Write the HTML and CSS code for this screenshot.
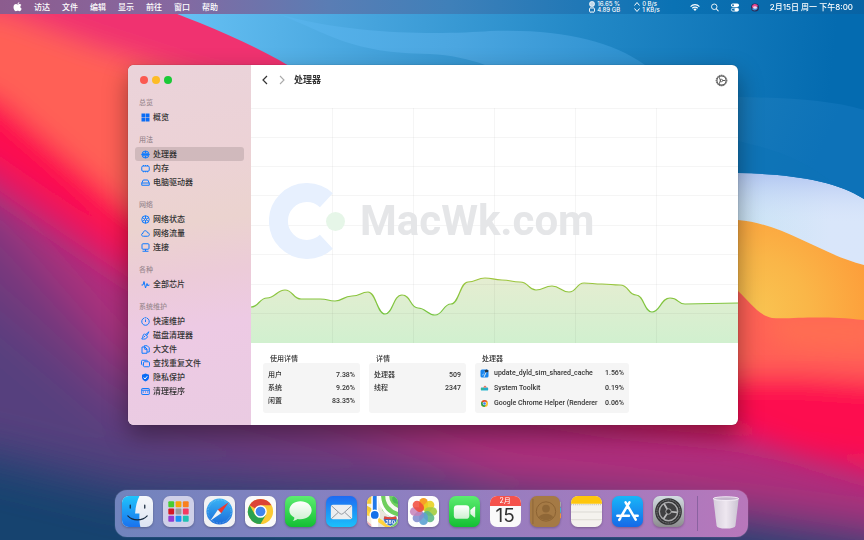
FILE: index.html
```html
<!DOCTYPE html>
<html lang="zh-CN">
<head>
<meta charset="utf-8">
<meta name="viewport" content="width=device-width, initial-scale=1">
<title>处理器</title>
<link rel="stylesheet" href="styles.css">
</head>
<body>
<svg class="wallpaper" viewBox="0 0 864 540" preserveAspectRatio="none" aria-hidden="true">
  <defs>
    <filter id="soft" x="-10%" y="-30%" width="120%" height="160%"><feGaussianBlur stdDeviation="24"/></filter>
    <filter id="soft2" x="-10%" y="-30%" width="120%" height="160%"><feGaussianBlur stdDeviation="13"/></filter>
    <linearGradient id="sky" x1="180" y1="20" x2="830" y2="90" gradientUnits="userSpaceOnUse"><stop offset="0" stop-color="#66c0f3"/><stop offset=".3" stop-color="#45a3dc"/><stop offset=".62" stop-color="#2288c6"/><stop offset="1" stop-color="#046bb0"/></linearGradient>
    <linearGradient id="wave" x1="280" y1="0" x2="640" y2="60" gradientUnits="userSpaceOnUse"><stop offset="0" stop-color="#58b4ec"/><stop offset=".5" stop-color="#4ba6e0"/><stop offset="1" stop-color="#2d90cf"/></linearGradient>
    <linearGradient id="deep" x1="738" y1="0" x2="864" y2="60" gradientUnits="userSpaceOnUse"><stop offset="0" stop-color="#1b7dbb"/><stop offset="1" stop-color="#0d72b8"/></linearGradient>
    <linearGradient id="ice" x1="738" y1="190" x2="830" y2="190" gradientUnits="userSpaceOnUse"><stop offset="0" stop-color="#c8e3f4"/><stop offset="1" stop-color="#d9e6fa"/></linearGradient>
    <linearGradient id="iceTop" x1="0" y1="172" x2="0" y2="255" gradientUnits="userSpaceOnUse"><stop offset="0" stop-color="#a9bdf0" stop-opacity=".8"/><stop offset=".6" stop-color="#d8e6fa" stop-opacity=".1"/></linearGradient>
    <radialGradient id="gold" cx="755" cy="312" r="120" gradientUnits="userSpaceOnUse"><stop offset="0" stop-color="#f9c451"/><stop offset=".45" stop-color="#fab648"/><stop offset="1" stop-color="#fd9d3a"/></radialGradient>
  </defs>
  <rect width="864" height="540" fill="#16436f"/>
  <g filter="url(#soft)">
    <path fill="#573f7e" d="M-60-60V445L0 458L130 490L430 508L700 525L940 560V-60z"/>
    <path fill="#74397d" d="M-60-60V260L0 310L130 420L300 465L600 500L940 540V-60z"/>
    <path fill="#b02f7c" d="M-60-60V180L0 215L130 365L300 400L500 480L700 500L940 535V-60z"/>
  </g>
  <g filter="url(#soft2)">
    <path fill="#e01a66" d="M-60-60V150L0 192L130 280L330 380L600 425L738 440L940 495V-60z"/>
    <path fill="#fd0950" d="M-60-60V130L0 165L130 255L330 350L600 400L738 425L800 450L940 470V-60z"/>
    <path fill="#ff6157" d="M-60-60V70L0 98L60 150L130 210L330 320L600 360L738 375L800 375L940 385V-60z"/>
    <path fill="#f0316f" d="M-60-60V10L0 12L90 45L200 80L340 110L400-60z"/>
  </g>
  <path fill="#ff7a50" opacity=".6" filter="url(#soft2)" d="M760 315H880V350L780 345z"/>
  <path fill="url(#gold)" d="M700 200H864V320C820 315 795 319 772 318C758 315 750 302 738 291L700 280z"/>
  <path fill="url(#ice)" d="M700 150H864V265C820 254 785 224 738 220L700 220z"/>
  <path fill="url(#iceTop)" d="M700 150H864V265C820 254 785 224 738 220L700 220z"/>
  <path fill="url(#sky)" d="M140 0C200 22 258 45 302 74L400 173H738C790 174 835 180 864 199V0z"/>
  <path fill="url(#wave)" d="M278 14C330 34 350 53 430 54C450 55 470 59 485 65H645C610 40 560 29 490 31C450 34 360 37 278 14z"/>
  <path fill="url(#deep)" d="M738 97C790 98 830 100 864 110V199C835 180 790 174 738 173z"/>
  <path fill="#0d73b6" opacity=".6" d="M738 141C775 150 800 158 830 181C800 174 770 173 738 173z"/>
</svg>

<header class="menubar">
  <nav class="menus" aria-label="菜单">
    <a href="#" class="apple" aria-label="Apple"><svg viewBox="0 0 16 18" aria-hidden="true"><path fill="#fff" d="M11.4.3c.1 1.900-1.500 3.600-3.300 3.500C7.900 2 9.600.4 11.400.3zM8.400 4.700c.8 0 1.800-1 3.400-1 1.200 0 2.400.6 3.200 1.700-2.800 1.600-2.400 5.500.5 6.600-.6 1.700-2.200 4.600-4 4.600-1.200 0-1.700-.8-3.100-.8s-1.900.8-3.100.8C3.100 16.600.8 12.700.8 9.300c0-3.300 2.100-5.500 4.400-5.500 1.400 0 2.400.9 3.200.9z"/></svg></a>
    <a href="#">访达</a><a href="#">文件</a><a href="#">编辑</a><a href="#">显示</a><a href="#">前往</a><a href="#">窗口</a><a href="#">帮助</a>
  </nav>
  <div class="stats">
    <div class="stat">
      <span><svg viewBox="0 0 12 12" aria-hidden="true"><circle cx="6" cy="6" r="5" fill="#fff" fill-opacity=".5" stroke="#fff" stroke-width="1.500"/><path d="M4 1v10M8 1v10M1 4h10M1 8h10" stroke="#fff"/></svg>16.65 %</span>
      <span><svg viewBox="0 0 12 12" aria-hidden="true"><rect x="1" y="2" width="10" height="8" rx="2" fill="none" stroke="#fff" stroke-width="1.800"/><path d="M3 2V.5M6 2V.5M9 2V.5M3 11.500V10M6 11.500V10M9 11.500V10" stroke="#fff"/></svg>4.89 GB</span>
    </div>
    <div class="stat">
      <span><svg viewBox="0 0 12 12" aria-hidden="true"><path d="M1 9l5-6 5 6" fill="none" stroke="#fff" stroke-width="2"/></svg>0 B/s</span>
      <span><svg viewBox="0 0 12 12" aria-hidden="true"><path d="M1 3l5 6 5-6" fill="none" stroke="#fff" stroke-width="2"/></svg>1 KB/s</span>
    </div>
  </div>
  <div class="tray">
    <svg viewBox="0 0 20 18" aria-label="Wi-Fi" role="img"><g fill="none" stroke="#fff" stroke-width="2.300"><path d="M1.200 7.200C6 1.800 14 1.800 18.800 7.200"/><path d="M4.600 10.500c3-3.200 7.800-3.200 10.800 0"/></g><path fill="#fff" d="M6.800 12.500c1.800-1.800 4.600-1.800 6.400 0L10 16z"/></svg>
    <svg viewBox="0 0 20 18" aria-label="搜索" role="img"><circle cx="8.500" cy="7.500" r="5.500" fill="none" stroke="#fff" stroke-width="1.800"/><path d="M12.500 11.500L17 16.500" stroke="#fff" stroke-width="2.200"/></svg>
    <svg viewBox="0 0 20 18" aria-label="控制中心" role="img"><rect x="2" y="1" width="16" height="7" rx="3.500" fill="#fff"/><circle cx="6" cy="4.500" r="2" fill="#2372ab"/><rect x="2.800" y="10.300" width="14.400" height="6" rx="3" fill="none" stroke="#fff" stroke-width="1.600"/><rect x="9" y="10" width="8" height="6.500" rx="3" fill="#fff"/></svg>
    <svg viewBox="0 0 20 18" aria-label="Siri" role="img"><circle cx="10" cy="9" r="8" fill="#2b2b55"/><path d="M4 6c4-6 10-4 12 0-2 3-9 1-12 4z" fill="#e5478f"/><path d="M3 11c5 1 8-4 13-2-1 5-7 7-10 5z" fill="#3f8fd8"/><ellipse cx="10" cy="9" rx="4" ry="2.500" fill="#f7d4ee"/></svg>
    <time datetime="2021-02-15T20:00">2月15日 周一 下午8:00</time>
  </div>
</header>

<main class="window">
  <aside class="sidebar">
    <div class="lights"><button class="red" aria-label="关闭"></button><button class="yellow" aria-label="最小化"></button><button class="green" aria-label="缩放"></button></div>
    <nav aria-label="边栏">
      <section><h2>总览</h2>
        <a href="#"><svg viewBox="0 0 18 18" aria-hidden="true"><path fill="#0a6cf5" stroke="none" d="M1 1h7.500v7.500H1zM9.500 1H17v7.500H9.500zM1 9.500h7.500V17H1zM9.500 9.500H17V17H9.500z"/></svg>概览</a>
      </section>
      <section><h2>用法</h2>
        <a href="#" class="active" aria-current="page"><svg viewBox="0 0 18 18" aria-hidden="true"><circle cx="9" cy="9" r="7"/><path d="M5 6.500h8v5H5zM9 2v4M9 12v4M1 9h16"/></svg>处理器</a>
        <a href="#"><svg viewBox="0 0 18 18" aria-hidden="true"><rect x="1.500" y="4" width="15" height="10.500" rx="2.500"/><path d="M5 2v2M9 2v2M13 2v2M5 14.500v2M9 14.500v2M13 14.500v2"/></svg>内存</a>
        <a href="#"><svg viewBox="0 0 18 18" aria-hidden="true"><path d="M1.500 10L4.500 4h9l3 6v4.500h-15zM1.500 10h15"/></svg>电脑驱动器</a>
      </section>
      <section><h2>网络</h2>
        <a href="#"><svg viewBox="0 0 18 18" aria-hidden="true"><circle cx="9" cy="9" r="7.500"/><circle cx="9" cy="9" r="2"/><path d="M9 1.500V7M9 11v5.500M2.500 5l4.700 3M15.500 5l-4.700 3M2.500 13l4.700-3M15.500 13l-4.700-3"/></svg>网络状态</a>
        <a href="#"><svg viewBox="0 0 18 18" aria-hidden="true"><path d="M5 14.500C0 14.500 0 9 4 8.500 4.500 2 12 2 13 7.500c5 0 5 7 0 7z"/></svg>网络流量</a>
        <a href="#"><svg viewBox="0 0 18 18" aria-hidden="true"><rect x="2" y="1.500" width="14" height="11" rx="2"/><path d="M9 12.500V16M3 16.500h12"/></svg>连接</a>
      </section>
      <section><h2>各种</h2>
        <a href="#"><svg viewBox="0 0 18 18" aria-hidden="true"><path d="M1 10h3l2-7 3 13 3-9 2 5 1-2h2"/></svg>全部芯片</a>
      </section>
      <section><h2>系统维护</h2>
        <a href="#"><svg viewBox="0 0 18 18" aria-hidden="true"><path d="M6 2.200A7.500 7.500 0 1 0 12 2.200M7 1.500h4M9 5v5"/></svg>快速维护</a>
        <a href="#"><svg viewBox="0 0 18 18" aria-hidden="true"><path d="M16 1.500L9.500 7l2 2zM7 5.500l6 6c-2 5-6 5-11.500 4.500C4 13 3 8 7 5.500zM5 13l3-3"/></svg>磁盘清理器</a>
        <a href="#"><svg viewBox="0 0 18 18" aria-hidden="true"><path d="M6.500 4V1.500h6l4 4V14h-4M2 4h6l4 4v8.500H2zM7.500 4v4.500H12"/></svg>大文件</a>
        <a href="#"><svg viewBox="0 0 18 18" aria-hidden="true"><rect x="5" y="5.500" width="12" height="10" rx="2"/><path d="M3 12C1.500 12 1 11 1 10V4.500C1 3 2 2.500 3 2.500h8c1.500 0 2 1 2 2"/></svg>查找重复文件</a>
        <a href="#"><svg viewBox="0 0 18 18" aria-hidden="true"><path d="M9 1l7 2.500V9c0 4-3.500 6.500-7 8-3.500-1.500-7-4-7-8V3.500z" fill="#0a6cf5" stroke="none"/><path d="M5.500 9l2.500 3 4.500-5.500" stroke="#fff"/></svg>隐私保护</a>
        <a href="#"><svg viewBox="0 0 18 18" aria-hidden="true"><rect x="1.500" y="3" width="15" height="12" rx="1"/><path d="M1.500 6.500h15M4 10h2M8 10h2M12 10h2"/></svg>清理程序</a>
      </section>
    </nav>
  </aside>

  <div class="content">
    <div class="toolbar">
      <button aria-label="后退"><svg viewBox="0 0 10 10"><path d="M7 1L3 5l4 4" fill="none" stroke="#333" stroke-width="1.200"/></svg></button>
      <button aria-label="前进"><svg viewBox="0 0 10 10"><path d="M3 1l4 4-4 4" fill="none" stroke="#aaa" stroke-width="1.100"/></svg></button>
      <h1>处理器</h1>
      <button class="settings" aria-label="设置"><svg viewBox="0 0 24 24"><g fill="none" stroke="#4a4a4a"><circle cx="12" cy="12" r="8.500" stroke-width="2"/><circle cx="12" cy="12" r="10" stroke-width="1.500" stroke-dasharray="2.200 1.500"/><path d="M10 12L8 6M10 12L8 18M14 12h5" stroke-width="1.700"/><circle cx="12" cy="12" r="2.200" stroke-width="1.500"/></g></svg></button>
    </div>
    <div class="chart">
      <svg class="plot" viewBox="0 0 487 235" preserveAspectRatio="none" role="img" aria-label="处理器使用率">
        <defs><linearGradient id="area" x1="0" y1="170" x2="0" y2="235" gradientUnits="userSpaceOnUse"><stop offset="0" stop-color="#e5edd1"/><stop offset="1" stop-color="#d1f0cf"/></linearGradient>
        <linearGradient id="line" x1="0" y1="170" x2="0" y2="207" gradientUnits="userSpaceOnUse"><stop offset="0" stop-color="#9fc53c"/><stop offset="1" stop-color="#74c440"/></linearGradient></defs>
        <path fill="url(#area)" d="M0 199C8 199 8 190 16 190S26 182 34 182S42 191 50 191S60 191 69 191S76 193 84 193S92 188 101 188S109 184 117 184S126 206 134 206S142 187 151 187S159 200 167 200S176 207 184 207S192 196 200 196S209 174 217 174S226 170 234 170S242 172 251 172S260 174 269 174S277 182 285 182S293 178 301 178S310 184 318 184S325 175 333 175S342 176 351 176S360 177 369 177S377 187 385 187S393 204 401 204S410 190 419 190S426 196 434 196L487 195V235H0z"/>
        <path fill="none" stroke="#000" stroke-opacity=".04" d="M0 .5H487M0 29.500H487M0 58.500H487M0 87.500H487M0 117.500H487M0 146.500H487M0 176.500H487M0 205.500H487M81.500 0V235M162.500 0V235M243.500 0V235M324.500 0V235M405.500 0V235"/>
        <path fill="none" stroke="url(#line)" stroke-width="1.200" d="M0 199C8 199 8 190 16 190S26 182 34 182S42 191 50 191S60 191 69 191S76 193 84 193S92 188 101 188S109 184 117 184S126 206 134 206S142 187 151 187S159 200 167 200S176 207 184 207S192 196 200 196S209 174 217 174S226 170 234 170S242 172 251 172S260 174 269 174S277 182 285 182S293 178 301 178S310 184 318 184S325 175 333 175S342 176 351 176S360 177 369 177S377 187 385 187S393 204 401 204S410 190 419 190S426 196 434 196L487 195"/>
      </svg>
      <div class="watermark">
        <svg viewBox="0 0 76 76" aria-hidden="true"><path d="M57.400 17.200A28.500 28.500 0 1 0 57.400 58.800" fill="none" stroke="#e7f0fe" stroke-width="19"/><circle cx="66.500" cy="38.500" r="9.500" fill="#e6f6e8"/></svg>
        <span>MacWk.com</span>
      </div>
    </div>
    <div class="details">
      <section><h2>使用详情</h2>
        <div class="card"><table>
          <tr><th scope="row">用户</th><td>7.38%</td></tr>
          <tr><th scope="row">系统</th><td>9.26%</td></tr>
          <tr><th scope="row">闲置</th><td>83.35%</td></tr>
        </table></div>
      </section>
      <section><h2>详情</h2>
        <div class="card"><table>
          <tr><th scope="row">处理器</th><td>509</td></tr>
          <tr><th scope="row">线程</th><td>2347</td></tr>
        </table></div>
      </section>
      <section class="wide"><h2>处理器</h2>
        <div class="card"><table>
          <tr><th scope="row"><span><svg viewBox="0 0 18 18" aria-hidden="true"><rect x="1" y="1" width="16" height="16" rx="3" fill="#1684ee"/><path d="M5 14l5-10M4 11h5" stroke="#8fc8fb"/><path d="M8 16l5-11" stroke="#dce6ee" stroke-width="2"/><path d="M9 3l4-2 4 2-1 3-5 1z" fill="#27333f"/></svg>update_dyld_sim_shared_cache</span></th><td>1.56%</td></tr>
          <tr><th scope="row"><span><svg viewBox="0 0 18 18" aria-hidden="true"><path d="M2 7h14v6H2z" fill="#28b7cf"/><path d="M6 7l4-4 4 4z" fill="#e9644c"/><path d="M2 8h5v4H2z" fill="#48c57c"/><path d="M1 10h16" stroke="#1689b8"/></svg>System Toolkit</span></th><td>0.19%</td></tr>
          <tr><th scope="row"><span><svg viewBox="0 0 18 18" aria-hidden="true"><circle cx="9" cy="9" r="7" fill="#fbc32c"/><path d="M9 9L2.900 5.500A7 7 0 0 1 15.100 5.500H9z" fill="#dc4434"/><path d="M9 9L2.900 5.500A7 7 0 0 0 9 16l3-5z" fill="#2a9f50"/><circle cx="9" cy="9" r="3.500" fill="#fff"/><circle cx="9" cy="9" r="2.600" fill="#3b7ded"/></svg>Google Chrome Helper (Renderer</span></th><td>0.06%</td></tr>
        </table></div>
      </section>
    </div>
  </div>
</main>

<footer class="dock">
  <div class="apps">
    <button aria-label="访达"><svg viewBox="0 0 32 32"><defs><linearGradient id="fb" x2="0" y2="1"><stop stop-color="#20c4fb"/><stop offset="1" stop-color="#1a72ee"/></linearGradient><linearGradient id="fw" x2="0" y2="1"><stop stop-color="#f6f8fb"/><stop offset="1" stop-color="#dce4f2"/></linearGradient></defs><rect width="32" height="32" rx="7" fill="url(#fw)"/><path d="M18 0C15.500 5 14 11 13.500 18H18C17.800 23 18 28 19 32H7a7 7 0 0 1-7-7V7a7 7 0 0 1 7-7z" fill="url(#fb)"/><path d="M8.500 9.500v3M23.500 9.500v3" stroke="#15283c" stroke-width="1.300" stroke-linecap="round"/><path d="M6 20.500c5 5.500 15 5.500 20 0" fill="none" stroke="#15283c" stroke-width="1.200" stroke-linecap="round"/></svg></button>
    <button aria-label="启动台"><svg viewBox="0 0 32 32"><rect width="32" height="32" rx="7" fill="#cfd0e8"/><g><rect x="5.500" y="5.500" width="6" height="6" rx="1" fill="#47cc32"/><rect x="13" y="5.500" width="6" height="6" rx="1" fill="#f7a50b"/><rect x="20.500" y="5.500" width="6" height="6" rx="1" fill="#f9801e"/><rect x="5.500" y="13" width="6" height="6" rx="1" fill="#d61824"/><rect x="13" y="13" width="6" height="6" rx="1" fill="#9a9a9c"/><rect x="20.500" y="13" width="6" height="6" rx="1" fill="#f63a61"/><rect x="5.500" y="20.500" width="6" height="6" rx="1" fill="#943bd1"/><rect x="13" y="20.500" width="6" height="6" rx="1" fill="#1792f5"/><rect x="20.500" y="20.500" width="6" height="6" rx="1" fill="#20c2b2"/></g></svg></button>
    <button aria-label="Safari"><svg viewBox="0 0 32 32"><defs><linearGradient id="sf" x2="0" y2="1"><stop stop-color="#39b4f5"/><stop offset="1" stop-color="#1c6cda"/></linearGradient></defs><rect width="32" height="32" rx="7" fill="#f1f1f3"/><circle cx="16" cy="16" r="13.500" fill="url(#sf)"/><circle cx="16" cy="16" r="12" fill="none" stroke="#b8def8" stroke-width="1.500" stroke-opacity=".6" stroke-dasharray=".4 1.170"/><path d="M25.500 6.500L17.700 17.700 14.300 14.300z" fill="#f0382d"/><path d="M6.500 25.500l7.800-11.200 3.400 3.400z" fill="#f2f4f6"/></svg></button>
    <button aria-label="Chrome"><svg viewBox="0 0 32 32"><rect width="32" height="32" rx="7" fill="#fafafa"/><circle cx="16" cy="16" r="13" fill="#fbc934"/><path d="M16 16L4.740 9.500A13 13 0 0 1 27.260 9.500H16z" fill="#dc4437"/><path d="M10.370 19.250L4.740 9.500A13 13 0 0 0 16 29l5.630-9.750z" fill="#2ba14f"/><circle cx="16" cy="16" r="6.500" fill="#fff"/><circle cx="16" cy="16" r="5" fill="#4285ee"/></svg></button>
    <button aria-label="信息"><svg viewBox="0 0 32 32"><defs><linearGradient id="grn" x2="0" y2="1"><stop stop-color="#5ced70"/><stop offset="1" stop-color="#13bf33"/></linearGradient><linearGradient id="bub" x2="0" y2="1"><stop stop-color="#fff"/><stop offset="1" stop-color="#cdf0d0"/></linearGradient></defs><rect width="32" height="32" rx="7" fill="url(#grn)"/><path d="M16 5.500c6.500 0 11.500 4 11.500 9.300S22.500 24 16 24c-1.100 0-2-.1-3-.300-1.500 1.200-3.200 1.900-5 2 1.200-1 1.700-2.200 1.600-3.500C6.300 20.500 4.500 18 4.500 14.800 4.500 9.500 9.500 5.500 16 5.500z" fill="url(#bub)"/></svg></button>
    <button aria-label="邮件"><svg viewBox="0 0 32 32"><defs><linearGradient id="ml" x2="0" y2="1"><stop stop-color="#1e6af2"/><stop offset="1" stop-color="#1bc0fb"/></linearGradient></defs><rect width="32" height="32" rx="7" fill="url(#ml)"/><rect x="5" y="9" width="22" height="15" rx="2" fill="#eceef0"/><path d="M5.500 10l9 8.200q1.500 1.200 3 0l9-8.200M5.500 23.500l7-6.500M26.500 23.500l-7-6.500" fill="none" stroke="#8f969e"/></svg></button>
    <button aria-label="地图"><svg viewBox="0 0 32 32"><defs><clipPath id="mc"><rect width="32" height="32" rx="7"/></clipPath></defs><g clip-path="url(#mc)"><path fill="#f3f0e4" d="M0 0h32v32H0z"/><path d="M12 0h20v32H20z" fill="#6fcf5e"/><path d="M11 11l16 13-3 8H11z" fill="#e9e6dc"/><path d="M0 0h6v8H0zM0 10l5 3v7H0z" fill="#f5c934"/><path d="M13 0c1 14 8 21 21 23" fill="none" stroke="#fff" stroke-width="3"/><path d="M21-2c-1 9 5 15 13 17" fill="none" stroke="#f6f8f0" stroke-width="4"/><circle cx="31" cy="3" r="5" fill="#4ab958"/><path d="M-1 16l25 17" stroke="#ffd23d" stroke-width="4"/><path d="M0 26l9 7H0z" fill="#f4abb2"/><path d="M8 0v32" stroke="#fff" stroke-width="7"/><path d="M8 0v17" stroke="#1f78e8" stroke-width="4"/><circle cx="8" cy="19.500" r="5.500" fill="#fff"/><circle cx="8" cy="19.500" r="4" fill="#1471e9"/><path d="M18 21q6 2 12 0c2 4 0 8-6 10-6-2-8-6-6-10z" fill="#2869c6" stroke="#dce3ee" stroke-width=".7"/><path d="M18 21q6 2 12 0l.7 3H17.300z" fill="#e04638"/></g><text x="24" y="29" text-anchor="middle" class="shield">280</text></svg></button>
    <button aria-label="照片"><svg viewBox="0 0 32 32"><rect width="32" height="32" rx="7" fill="#fdfdfd"/><g opacity=".95"><rect x="11.500" y="2" width="9" height="13" rx="4.500" fill="#f79b1c"/><rect x="11.500" y="2" width="9" height="13" rx="4.500" fill="#e8cf18" opacity=".9" transform="rotate(45 16 16)"/><rect x="11.500" y="2" width="9" height="13" rx="4.500" fill="#a0ca35" opacity=".9" transform="rotate(90 16 16)"/><rect x="11.500" y="2" width="9" height="13" rx="4.500" fill="#55b582" opacity=".9" transform="rotate(135 16 16)"/><rect x="11.500" y="2" width="9" height="13" rx="4.500" fill="#549fd0" opacity=".9" transform="rotate(180 16 16)"/><rect x="11.500" y="2" width="9" height="13" rx="4.500" fill="#7d88cc" opacity=".9" transform="rotate(225 16 16)"/><rect x="11.500" y="2" width="9" height="13" rx="4.500" fill="#c27ab5" opacity=".85" transform="rotate(270 16 16)"/><rect x="11.500" y="2" width="9" height="13" rx="4.500" fill="#f0402f" opacity=".85" transform="rotate(315 16 16)"/></g></svg></button>
    <button aria-label="FaceTime"><svg viewBox="0 0 32 32"><rect width="32" height="32" rx="7" fill="url(#grn)"/><rect x="5" y="9.500" width="16" height="14" rx="3.500" fill="url(#bub)"/><path d="M22 14.500l4-3.500q1-.7 1 .5v10q0 1.200-1 .5l-4-3.500z" fill="url(#bub)"/></svg></button>
    <button class="calendar" aria-label="日历"><span class="month">2月</span><span class="day">15</span></button>
    <button aria-label="通讯录"><svg viewBox="0 0 32 32"><path d="M29 6h3v5h-3z" fill="#a6a8a8"/><path d="M29 12h3v5h-3z" fill="#43b5cd"/><path d="M29 18h3v5h-3z" fill="#f3953c"/><rect width="31" height="32" rx="7" fill="#a57a45"/><path d="M3 3v26" stroke="#8e6637"/><circle cx="16.500" cy="16" r="10" fill="none" stroke="#8b6233"/><circle cx="16.500" cy="13" r="4" fill="#8f6737"/><path d="M9 22c2-5 13-5 15 0-4 4-11 4-15 0z" fill="#8f6737"/></svg></button>
    <button aria-label="备忘录"><svg viewBox="0 0 32 32"><rect width="32" height="32" rx="7" fill="#f4f2ee"/><path d="M0 8V7a7 7 0 0 1 7-7h18a7 7 0 0 1 7 7v1z" fill="#fec60c"/><path d="M0 9h32" stroke="#b9b5a6" stroke-dasharray="1 1"/><path d="M0 16.500h32M0 24.500h32" stroke="#d4d2cd" stroke-width=".8"/></svg></button>
    <button aria-label="App Store"><svg viewBox="0 0 32 32"><defs><linearGradient id="as" x2="0" y2="1"><stop stop-color="#18b6f8"/><stop offset="1" stop-color="#1669e8"/></linearGradient></defs><rect width="32" height="32" rx="7" fill="url(#as)"/><path d="M18 6.500L9.500 21M14 6.500l10.500 18M5.500 20.500h12M22.500 20.500h4M8.500 23l-1 1.700" fill="none" stroke="#fff" stroke-width="2.600" stroke-linecap="round"/></svg></button>
    <button aria-label="系统偏好设置"><svg viewBox="0 0 32 32"><defs><linearGradient id="st" x2="0" y2="1"><stop stop-color="#d3dce2"/><stop offset="1" stop-color="#8c8c8e"/></linearGradient></defs><rect width="32" height="32" rx="7" fill="url(#st)"/><circle cx="16" cy="16" r="13.800" fill="#333335"/><circle cx="16" cy="16" r="12" fill="none" stroke="#8a8a8c" stroke-width="1" stroke-dasharray="1.100 .7"/><circle cx="16" cy="16" r="9.500" fill="#404042" stroke="#a8a8aa" stroke-width="1.500"/><path d="M16 16l9 1M16 16L11.500 8M16 16l-5 7.500" stroke="#bababc" stroke-width="1.800"/><circle cx="16" cy="16" r="2.800" fill="#343436" stroke="#aaa"/></svg></button>
  </div>
  <div class="divider"></div>
  <button class="trash" aria-label="废纸篓"><svg viewBox="0 0 30 35"><defs><linearGradient id="tr" x2="1" y2="0"><stop stop-color="#d7d4dd"/><stop offset=".5" stop-color="#f2f0f4"/><stop offset="1" stop-color="#cbc8d3"/></linearGradient></defs><path d="M1.500 2.500L5 31.500q.5 3 10 3t10-3L28.500 2.500z" fill="url(#tr)" opacity=".93"/><ellipse cx="15" cy="2.800" rx="13.500" ry="2" fill="#c5b6cd" stroke="#f4eff7"/></svg></button>
</footer>
</body>
</html>
```
FILE: styles.css
```css
* { box-sizing: border-box; }

body {
  margin: 0;
  min-height: 100vh;
  display: flex;
  flex-direction: column;
  font-family: Inter, "Noto Sans CJK SC", sans-serif;
  font-size: 8px;
  line-height: 14px;
  color: #333;
}

h1, h2 { margin: 0; font-weight: 500; }
a { color: inherit; text-decoration: none; }
svg { display: block; flex: none; }
button { border: 0; padding: 0; background: none; font: inherit; color: inherit; }

.wallpaper {
  position: fixed;
  inset: 0;
  width: 100%;
  height: 100%;
  z-index: -1;
}

/* Menu bar */
.menubar {
  display: flex;
  align-items: center;
  height: 14px;
  padding: 0 11px 0 13px;
  color: #fff;
  font-weight: 500;
  background: linear-gradient(90deg, #8c5c8e, #8668a0 20%, #5a7db4 38%, #3f80b9 52%, #0a72b4 78%, #0863a4);
}
.menus { display: flex; align-items: center; gap: 12px; flex: 1; }
.apple svg { width: 9px; height: 10px; }
.stats { display: flex; gap: 14px; margin-right: 30px; font-size: 6px; line-height: 6px; }
.stat span { display: flex; align-items: center; gap: 2px; }
.stat svg { width: 6px; height: 6px; }
.tray { display: flex; align-items: center; gap: 10px; }
.tray svg { width: 10px; height: 9px; }

/* Application window */
.window {
  display: grid;
  grid-template-columns: 123px 1fr;
  margin: 51px 126px auto 128px;
  border-radius: 6px;
  overflow: hidden;
  background: #fff;
  box-shadow: 0 10px 24px rgba(0, 0, 0, .4), 0 0 1px rgba(0, 0, 0, .5);
}
.sidebar {
  padding: 11px 7px 8px;
  background: linear-gradient(172deg, #ead3da, #ecd2d6 25%, #ebd3cf 44%, #eccbd8 58%, #edcae4 72%, #eacbe2);
}
.lights { display: flex; gap: 4px; padding: 0 5px; margin-bottom: 12px; }
.lights button { width: 8px; height: 8px; border-radius: 50%; }
.lights .red { background: #fb5951; }
.lights .yellow { background: #fdbc26; }
.lights .green { background: #1bc937; }
.sidebar section { margin-bottom: 9px; }
.sidebar h2 { padding-left: 4px; font-size: 7px; color: #9c8a91; }
.sidebar a {
  display: flex;
  align-items: center;
  gap: 3px;
  height: 14px;
  padding-left: 6px;
  border-radius: 3px;
  font-weight: 500;
}
.sidebar a.active { background: #d0b9bc; }
.sidebar a svg { width: 9px; height: 9px; fill: none; stroke: #0f7bff; stroke-width: 2px; }

.toolbar { display: flex; align-items: center; height: 30px; padding: 0 10px 0 9px; gap: 7px; }
.toolbar button svg { width: 10px; height: 10px; }
.toolbar h1 { flex: 1; font-size: 9px; font-weight: 700; }
.toolbar .settings svg { width: 13px; height: 13px; }

.chart { position: relative; margin-top: 13px; }
.plot { width: 100%; height: 235px; }
.watermark {
  position: absolute;
  left: 18px;
  top: 75px;
  display: flex;
  align-items: center;
  gap: 15px;
  font: 700 42px/76px Roboto, "Noto Sans CJK SC", sans-serif;
  color: #e5e6e8;
}
.watermark svg { width: 76px; height: 76px; }

.details {
  display: grid;
  grid-template-columns: 97px 97px 154px;
  gap: 9px;
  padding: 12px;
  font-family: Roboto, "Noto Sans CJK SC", sans-serif;
  font-size: 7px;
}
.details section { display: flex; flex-direction: column; }
.details h2 { padding-left: 7px; font-size: 7px; line-height: 8px; }
.card { flex: 1; padding: 6px 5px 5px; background: #f5f5f5; border-radius: 3px; }
.card table { width: 100%; border-collapse: collapse; }
.card th, .card td { padding: 0; height: 13px; line-height: 13px; font-weight: 500; text-align: left; white-space: nowrap; }
.card td { text-align: right; }
.wide .card { padding: 3px 5px 2px; }
.wide th, .wide td { height: 15px; line-height: 15px; }
.wide th span { display: flex; align-items: center; gap: 5px; }
.wide th svg { width: 9px; height: 9px; }

/* Dock */
.dock {
  display: flex;
  align-items: flex-start;
  margin: 0 116px 3px 115px;
  padding: 6px 7px;
  border-radius: 12px;
  background: linear-gradient(90deg, #7184bd, #8a80c1 40%, #a17bbe 75%, #b877bb);
  box-shadow: 0 0 1px rgba(255, 255, 255, .5);
}
.apps { display: flex; flex: 1; justify-content: space-between; }
.apps button, .apps svg { width: 31px; height: 31px; }
.apps svg { filter: drop-shadow(0 1px 1px rgba(0, 0, 0, .25)); }
.shield { font: 700 5px Inter, sans-serif; fill: #fff; }
.calendar {
  display: flex;
  flex-direction: column;
  border-radius: 7px;
  overflow: hidden;
  background: #fafafa;
  text-align: center;
}
.month { display: block; width: 100%; background: #f5524b; color: #fff; font-size: 7px; line-height: 10px; }
.day { display: block; width: 100%; font-size: 19px; line-height: 20px; color: #333; font-weight: 400; }
.divider { width: 1px; height: 35px; margin: 0 13px; background: #8a62a0; }
.trash svg { width: 30px; height: 33px; }
```
